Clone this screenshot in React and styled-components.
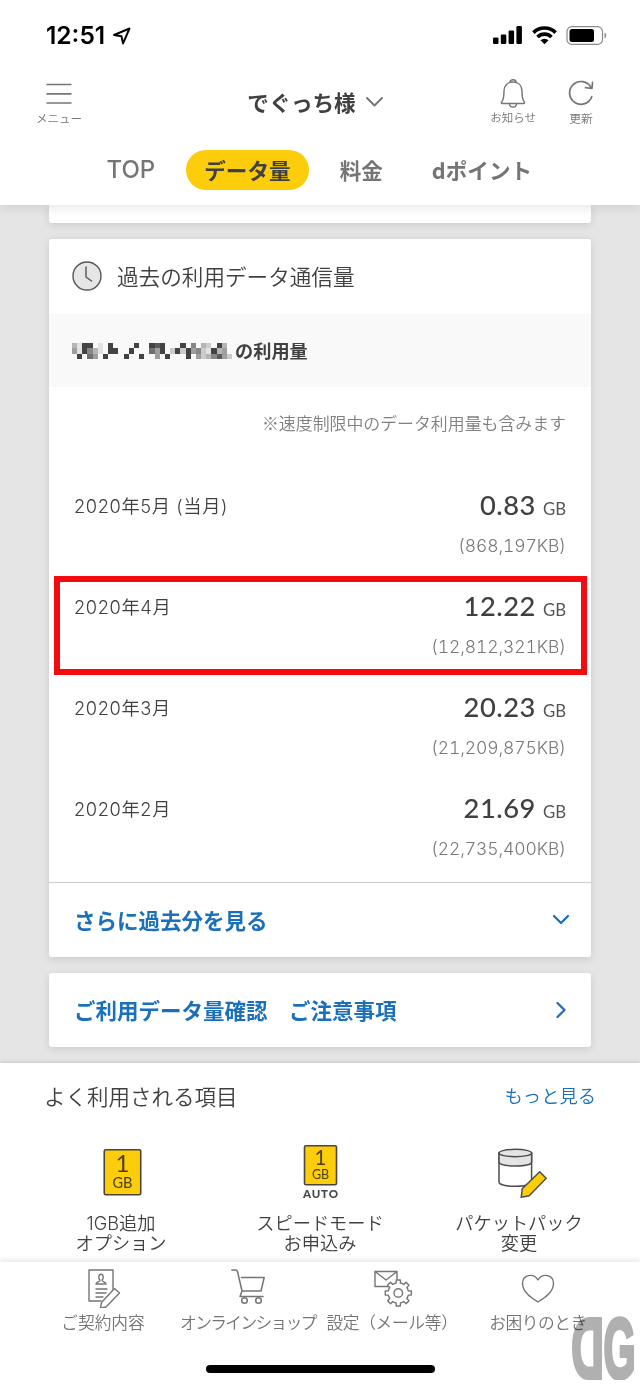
import React from 'react';
import styled, { createGlobalStyle } from 'styled-components';

const ink = '#404040';
const grey = '#757575';
const blue = '#1a70bb';
const yellow = '#fbcd0a';
const jp = '"Noto Sans CJK JP", sans-serif';

const GlobalStyle = createGlobalStyle`
  *,
  *::after {
    box-sizing: border-box;
  }

  body {
    margin: 0;
    background: #fff;
    color: ${ink};
    font-family: ${jp};
  }
`;

const Screen = styled.div`
  position: relative;
  width: 640px;
  height: 1385px;
  overflow: hidden;
  display: flex;
  flex-direction: column;
`;

const Label = styled.span`
  font-family: ${(p) => p.$font || jp};
  font-size: ${(p) => p.$size}px;
  font-weight: ${(p) => p.$weight || 350};
  font-variant-numeric: ${(p) => (p.$tabular ? 'tabular-nums' : 'normal')};
  line-height: ${(p) => p.$line || p.$size * 1.2}px;
  letter-spacing: ${(p) => p.$track || 0}px;
  color: ${(p) => p.$color || ink};
  text-align: ${(p) => p.$align || 'inherit'};
  white-space: pre;
`;

const Icon = styled.svg`
  display: block;
  flex: none;
  fill: none;
  stroke: ${(p) => p.$color || grey};
  stroke-width: ${(p) => p.$stroke || 1.4};
  stroke-linecap: ${(p) => (p.$butt ? 'butt' : 'round')};
  stroke-linejoin: round;
`;

const SolidIcon = styled.svg`
  display: block;
  flex: none;
  fill: #000;
`;

/* Header */

const Header = styled.header`
  position: relative;
  z-index: 1;
  flex: none;
  height: 205px;
  background: #fff;
  box-shadow: 0 1px 12px rgba(0, 0, 0, 0.12);
`;

const StatusBar = styled.div`
  height: 72px;
  padding: 0 33px 1px 46px;
  display: flex;
  align-items: center;
  gap: 7px;
`;

const StatusIcons = styled.div`
  margin-left: auto;
  display: flex;
  align-items: center;
  gap: 9px;
`;

const TitleBar = styled.div`
  height: 60px;
  padding: 0 46px 0 36px;
  display: grid;
  grid-template-columns: 1fr auto 1fr;
  align-items: center;
`;

const Account = styled.div`
  display: flex;
  align-items: center;
  gap: 10px;
`;

const Actions = styled.div`
  display: flex;
  justify-content: ${(p) => (p.$end ? 'flex-end' : 'flex-start')};
  gap: 32px;
`;

const Action = styled.div`
  display: flex;
  flex-direction: column;
  align-items: center;
  gap: 2px;
  padding-top: 1px;
`;

const Tabs = styled.nav`
  display: flex;
  gap: 12px;
  padding: 18px 0 0 88px;
`;

const Tab = styled.div`
  height: 40px;
  padding: 0 18.5px;
  display: flex;
  align-items: center;
  border-radius: 20px;
  background: ${(p) => (p.$active ? yellow : 'transparent')};
`;

/* Content */

const Content = styled.main`
  flex: none;
  height: 858px;
  padding: 0 49px;
  background: #e5e5e5;
  display: flex;
  flex-direction: column;
  gap: 16px;
`;

const Card = styled.section`
  flex: none;
  height: ${(p) => p.$height}px;
  background: #fff;
  border-radius: ${(p) => (p.$cut ? '0 0 3px 3px' : '3px')};
  box-shadow: 0 2px 8px rgba(0, 0, 0, 0.12);
`;

const CardTitle = styled.div`
  height: 75px;
  padding: 0 23px 1px;
  display: flex;
  align-items: center;
  gap: 15px;
`;

const SubTitle = styled.div`
  height: 73px;
  padding: 0 23px;
  display: flex;
  align-items: center;
  gap: 3px;
  background: #f9f9f9;
`;

const Note = styled.div`
  height: 88px;
  padding: 24px 25px 0;
  text-align: right;
`;

const Months = styled.div`
  height: 407px;
`;

const Month = styled.div`
  position: relative;
  height: 101px;
  padding: 15px 25px 0;
  display: flex;
  justify-content: space-between;

  ${(p) => p.$marked && `
    &::after {
      content: '';
      position: absolute;
      top: 0;
      left: 5px;
      right: 4px;
      height: 99px;
      border: 6px solid #f40b0f;
    }
  `}
`;

const MonthName = styled.div`
  padding-top: 4px;
`;

const Usage = styled.div`
  display: flex;
  flex-direction: column;
  align-items: flex-end;
  gap: 15px;
`;

const Amount = styled.div`
  height: 30px;
  display: flex;
  align-items: baseline;
  gap: 7px;
`;

const LinkRow = styled.div`
  height: 75px;
  padding: 0 21px 1px 25px;
  display: flex;
  align-items: center;
  justify-content: space-between;
  border-top: ${(p) => (p.$divided ? '1px solid #ccc' : '0')};
`;

/* Shortcuts and bottom navigation */

const Shortcuts = styled.section`
  position: relative;
  flex: none;
  height: 199px;
  background: #fff;
  box-shadow: 0 -1px 4px rgba(0, 0, 0, 0.12);
`;

const ShortcutsHead = styled.div`
  height: 65px;
  padding: 0 44px;
  display: flex;
  align-items: center;
  justify-content: space-between;
`;

const ShortcutGrid = styled.div`
  display: grid;
  grid-template-columns: repeat(3, 199px);
  justify-content: center;
`;

const Shortcut = styled.div`
  display: flex;
  flex-direction: column;
  align-items: center;
`;

const ShortcutIcon = styled.div`
  height: 86px;
  padding-top: 17px;
`;

const BottomNav = styled.nav`
  position: relative;
  flex: none;
  height: 123px;
  padding: 7px 0 0 30px;
  display: grid;
  grid-template-columns: 146px 144px 144px 148px;
  background: #fff;
  box-shadow: 0 -1px 6px rgba(0, 0, 0, 0.13);
`;

const NavItem = styled.div`
  display: flex;
  flex-direction: column;
  align-items: center;
  gap: 4px;
`;

const HomeIndicator = styled.div`
  position: absolute;
  left: 206px;
  bottom: 12px;
  width: 229px;
  height: 8px;
  border-radius: 4px;
  background: #000;
`;

const Watermark = styled.svg`
  position: absolute;
  left: 571px;
  top: 1316px;
  mix-blend-mode: multiply;
`;

// One digit per cell, 0 is empty and 9 is the darkest.
const mosaic = [
  '3188010800008008780008050320830',
  '4185310880080006480282845218340',
  '0806408000800800408000804235742',
];

function Mosaic() {
  return (
    <SolidIcon width="160" height="16" viewBox="0 0 31 3" preserveAspectRatio="none" shapeRendering="crispEdges">
      {mosaic.map((row, y) =>
        row.split('').map((v, x) => (
          v === '0' ? null : <rect key={`${x}-${y}`} x={x} y={y} width="1" height="1" fill="#2c2c2c" fillOpacity={v / 9} />
        ))
      )}
    </SolidIcon>
  );
}

function GbBadge({ auto }) {
  const w = auto ? 32 : 36.5;
  const h = auto ? 40 : 46;
  const mid = auto ? 22.5 : 23.5;
  return (
    <Icon width="44" height="58" viewBox="0 0 44 58" $color="#4d4535" $stroke="1.6">
      <rect x={mid - w / 2} y={auto ? 0.8 : 4.8} width={w} height={h - 1} rx="1.5" fill={yellow} />
      <g fill="#4d4018" stroke="none" textAnchor="middle" fontFamily="Lato, sans-serif">
        <text x={mid} y={auto ? 19.5 : 27} fontSize={auto ? 20.5 : 24}>1</text>
        <text x={mid} y={auto ? 34 : 43} fontSize={auto ? 12.5 : 14.5}>GB</text>
        {auto && (
          <text x="22.5" y="53" fontSize="11.5" fontWeight="900" fill="#484848" textLength="35">AUTO</text>
        )}
      </g>
    </Icon>
  );
}

function PacketIcon() {
  return (
    <Icon width="56" height="58" viewBox="-6 0 56 58" $color="#4d4d4d" $stroke="1.5">
      <path d="M2 8v29c0 2.600 7.300 4.300 16.300 4.300s16.300-1.700 16.300-4.300V8" fill="#fff" />
      <path d="M2 8v9c0 2.600 7.300 4 16.300 4s16.300-1.400 16.300-4V8" fill="#e4e4e4" />
      <ellipse cx="18.300" cy="8" rx="16.300" ry="3.700" fill="#e4e4e4" />
      <path d="M43.500 26.500 50 33 33 50.500l-8 1.500 1-8.500Z" transform="translate(-.8 .3)" fill={yellow} />
    </Icon>
  );
}

function ContractIcon() {
  return (
    <Icon width="37" height="39" viewBox="-3 0 37 39">
      <path d="M13 32H1V1h24v19" />
      <path d="M8 15c0-2.500 4-1.700 4-4-2-1.500-1.500-5.800 1-5.800s3 4.300 1 5.800c0 2.300 4 1.500 4 4ZM8 20h11M8 24h10M8 28h7" />
      <path d="m26.500 19.500 5 4.500-13.500 14-5.500 1 1-5.500Z" />
    </Icon>
  );
}

function CartIcon() {
  return (
    <Icon width="34" height="39" viewBox="0 0 34 39" $stroke="1.5">
      <path d="M.8 1h4c1 0 1.400.5 1.700 1.500L11 22l-2 5.500h23M10.500 8.500h22.700L30 22H11" />
      <circle cx="13.500" cy="31.500" r="2.800" />
      <circle cx="27.500" cy="31.500" r="2.800" />
    </Icon>
  );
}

function MailGearIcon() {
  const teeth = Array.from({ length: 8 }, (_, i) => {
    const points = [[-22.5, 10.2], [-12, 10.2], [-9, 13.2], [9, 13.2], [12, 10.2]];
    return points.map(([a, r]) => {
      const t = ((i * 45 + a) * Math.PI) / 180;
      return `${(24.3 + r * Math.sin(t)).toFixed(2)},${(24 - r * Math.cos(t)).toFixed(2)}`;
    }).join(' ');
  }).join(' ');
  return (
    <Icon width="41" height="39" viewBox="-2 0 41 39">
      <path d="M1 2.500h22v15H1ZM1 2.500l11 8.500 11-8.500" />
      <polygon points={teeth} fill="#fff" />
      <circle cx="24.300" cy="24" r="4.300" />
    </Icon>
  );
}

function HeartIcon() {
  return (
    <Icon width="34" height="39" viewBox="0 0 34 39">
      <path d="M17 33C10 28.500 1.500 23 1.500 14.500 1.500 5.500 12.500 3.500 17 11c4.500-7.500 15.500-5.500 15.500 3.500C32.500 23 24 28.500 17 33Z" />
    </Icon>
  );
}

const months = [
  { name: '2020年5月 (当月)', gb: '0.83', kb: '868,197' },
  { name: '2020年4月', gb: '12.22', kb: '12,812,321', marked: true },
  { name: '2020年3月', gb: '20.23', kb: '21,209,875' },
  { name: '2020年2月', gb: '21.69', kb: '22,735,400' },
];

const shortcuts = [
  { icon: <GbBadge />, text: '1GB追加\nオプション' },
  { icon: <GbBadge auto />, text: 'スピードモード\nお申込み' },
  { icon: <PacketIcon />, text: 'パケットパック\n変更' },
];

const navItems = [
  { icon: <ContractIcon />, text: 'ご契約内容', track: 0 },
  { icon: <CartIcon />, text: 'オンラインショップ', track: -1.6 },
  { icon: <MailGearIcon />, text: '設定（メール等）', track: -0.3 },
  { icon: <HeartIcon />, text: 'お困りのとき', track: -0.4 },
];

export default function App() {
  return (
    <Screen>
      <GlobalStyle />
      <Header>
        <StatusBar>
          <Label $font="Inter, sans-serif" $size={24.5} $weight={600} $color="#000">12:51</Label>
          <Icon width="20" height="20" viewBox="0 0 20 20" $color="#000" $stroke="1.9">
            <path d="M17.500 2.500 2 9l7.500 1.200L11 17.500Z" />
          </Icon>
          <StatusIcons>
            <SolidIcon width="30" height="19" viewBox="0 0 30 19">
              <rect x="0" y="11.500" width="5.500" height="6.500" rx="1.200" />
              <rect x="7.800" y="8.500" width="5.500" height="9.500" rx="1.200" />
              <rect x="15.600" y="4.500" width="5.500" height="13.500" rx="1.200" />
              <rect x="23.400" y="0" width="5.500" height="18" rx="1.200" />
            </SolidIcon>
            <Icon width="25" height="19" viewBox="0 0 25 19" $color="#000" $stroke="3.6" $butt>
              <path d="M1.400 6.600a15.800 15.800 0 0 1 22.200 0M5.500 11a10 10 0 0 1 14 0" />
              <path d="M8.500 14.300a5.700 5.700 0 0 1 8 0L12.500 18.200Z" fill="#000" stroke="none" />
            </Icon>
            <Icon width="41" height="19" viewBox="0 0 41 19" $color="#8c8c8c" $stroke="1.2">
              <rect x="1" y=".6" width="35.500" height="17.800" rx="5" />
              <rect x="3.500" y="3" width="24.500" height="13" rx="2.500" fill="#000" stroke="none" />
              <path d="M38.500 6.500c2.300.8 2.300 5.200 0 6Z" fill="#8c8c8c" stroke="none" />
            </Icon>
          </StatusIcons>
        </StatusBar>

        <TitleBar>
          <Actions>
            <Action>
              <Icon width="26" height="30" viewBox="0 0 26 30" $stroke="1.7" $butt>
                <path d="M.5 4.500h25M.5 13.800h25M.5 23h25" />
              </Icon>
              <Label $size={11.5} $color={grey}>メニュー</Label>
            </Action>
          </Actions>
          <Account>
            <Label $size={21.6} $weight={700}>でぐっち様</Label>
            <Icon width="17" height="10" viewBox="0 0 17 10" $stroke="1.9">
              <path d="m1 1 7.500 7.500L16 1" />
            </Icon>
          </Account>
          <Actions $end>
            <Action>
              <Icon width="26" height="30" viewBox="0 0 26 30">
                <path d="M2.500 24.500c-1.300 0-1.500-1-.5-2C3.500 20.500 4 18 4 12c0-5.500 3.500-9 9-9s9 3.500 9 9c0 6 .5 8.500 2 10.500 1 1 .8 2-.5 2ZM10 3c0-3 6-3 6 0M9.500 24.800c.3 4.300 6.700 4.300 7 0" />
              </Icon>
              <Label $size={11.5} $color={grey}>お知らせ</Label>
            </Action>
            <Action>
              <Icon width="26" height="30" viewBox="0 0 26 30" $stroke="1.7">
                <path d="M23.800 17.500A11.400 11.400 0 1 1 23 8.500M24.500 3.300 24 9.500l-6.500-.8" />
              </Icon>
              <Label $size={11.8} $color={grey}>更新</Label>
            </Action>
          </Actions>
        </TitleBar>

        <Tabs>
          <Tab><Label $font="Inter, sans-serif" $size={24} $weight={500} $color={grey}>TOP</Label></Tab>
          <Tab $active><Label $size={21.6} $weight={700}>データ量</Label></Tab>
          <Tab><Label $size={21.6} $weight={700} $color={grey}>料金</Label></Tab>
          <Tab><Label $size={21.6} $weight={700} $color={grey}>dポイント</Label></Tab>
        </Tabs>
      </Header>

      <Content>
        <Card $height={18} $cut />
        <Card $height={718}>
          <CardTitle>
            <Icon width="30" height="30" viewBox="0 0 30 30" $color="#555">
              <circle cx="15" cy="15" r="14" fill="#e6e6e6" />
              <path d="M14 6v10l5.500 4" />
            </Icon>
            <Label $size={21.6}>過去の利用データ通信量</Label>
          </CardTitle>
          <SubTitle>
            <Mosaic />
            <Label $size={18.2} $weight={700}>の利用量</Label>
          </SubTitle>
          <Note><Label $size={16.9} $color="#808080">※速度制限中のデータ利用量も含みます</Label></Note>
          <Months>
            {months.map((m) => (
              <Month key={m.name} $marked={m.marked}>
                <MonthName>
                  <Label $font={`Inter, ${jp}`} $size={18.3} $track={0.6}>{m.name}</Label>
                </MonthName>
                <Usage>
                  <Amount>
                    <Label $font="Lato, sans-serif" $size={27.3} $weight={500} $line={30} $track={0.5}>{m.gb}</Label>
                    <Label $font="Lato, sans-serif" $size={16.8} $weight={400} $color="#555">GB</Label>
                  </Amount>
                  <Label $font="Inter, sans-serif" $size={17.5} $weight={300} $color="#777" $track={-0.1} $tabular>({m.kb}KB)</Label>
                </Usage>
              </Month>
            ))}
          </Months>
          <LinkRow $divided>
            <Label $size={21.5} $weight={700} $color={blue}>さらに過去分を見る</Label>
            <Icon width="18" height="12" viewBox="0 0 18 12" $color={blue} $stroke="2.3">
              <path d="m2 2 7 7 7-7" />
            </Icon>
          </LinkRow>
        </Card>
        <Card $height={74}>
          <LinkRow>
            <Label $size={21.5} $weight={700} $color={blue}>ご利用データ量確認　ご注意事項</Label>
            <Icon width="18" height="18" viewBox="0 0 18 18" $color={blue} $stroke="2.3">
              <path d="m5.500 2 7 7-7 7" />
            </Icon>
          </LinkRow>
        </Card>
      </Content>

      <Shortcuts>
        <ShortcutsHead>
          <Label $size={21.5}>よく利用される項目</Label>
          <Label $size={18.3} $color={blue}>もっと見る</Label>
        </ShortcutsHead>
        <ShortcutGrid>
          {shortcuts.map((s) => (
            <Shortcut key={s.text}>
              <ShortcutIcon>{s.icon}</ShortcutIcon>
              <Label $font={`Inter, ${jp}`} $size={18.2} $line={19.5} $align="center">{s.text}</Label>
            </Shortcut>
          ))}
        </ShortcutGrid>
      </Shortcuts>

      <BottomNav>
        {navItems.map((n) => (
          <NavItem key={n.text}>
            {n.icon}
            <Label $size={16.7} $color={grey} $track={n.track}>{n.text}</Label>
          </NavItem>
        ))}
      </BottomNav>
      <HomeIndicator />

      <Watermark width="64" height="64" viewBox="0 0 64 64" fill="#b0b0b0" stroke="#b0b0b0" strokeWidth="4">
        <g fontFamily="Liberation Sans, sans-serif" fontWeight="700" fontSize="86">
          <text transform="translate(33 61.500) scale(-.53 1)">D</text>
          <text transform="translate(32.500 61.500) scale(.48 1)">G</text>
        </g>
      </Watermark>
    </Screen>
  );
}
